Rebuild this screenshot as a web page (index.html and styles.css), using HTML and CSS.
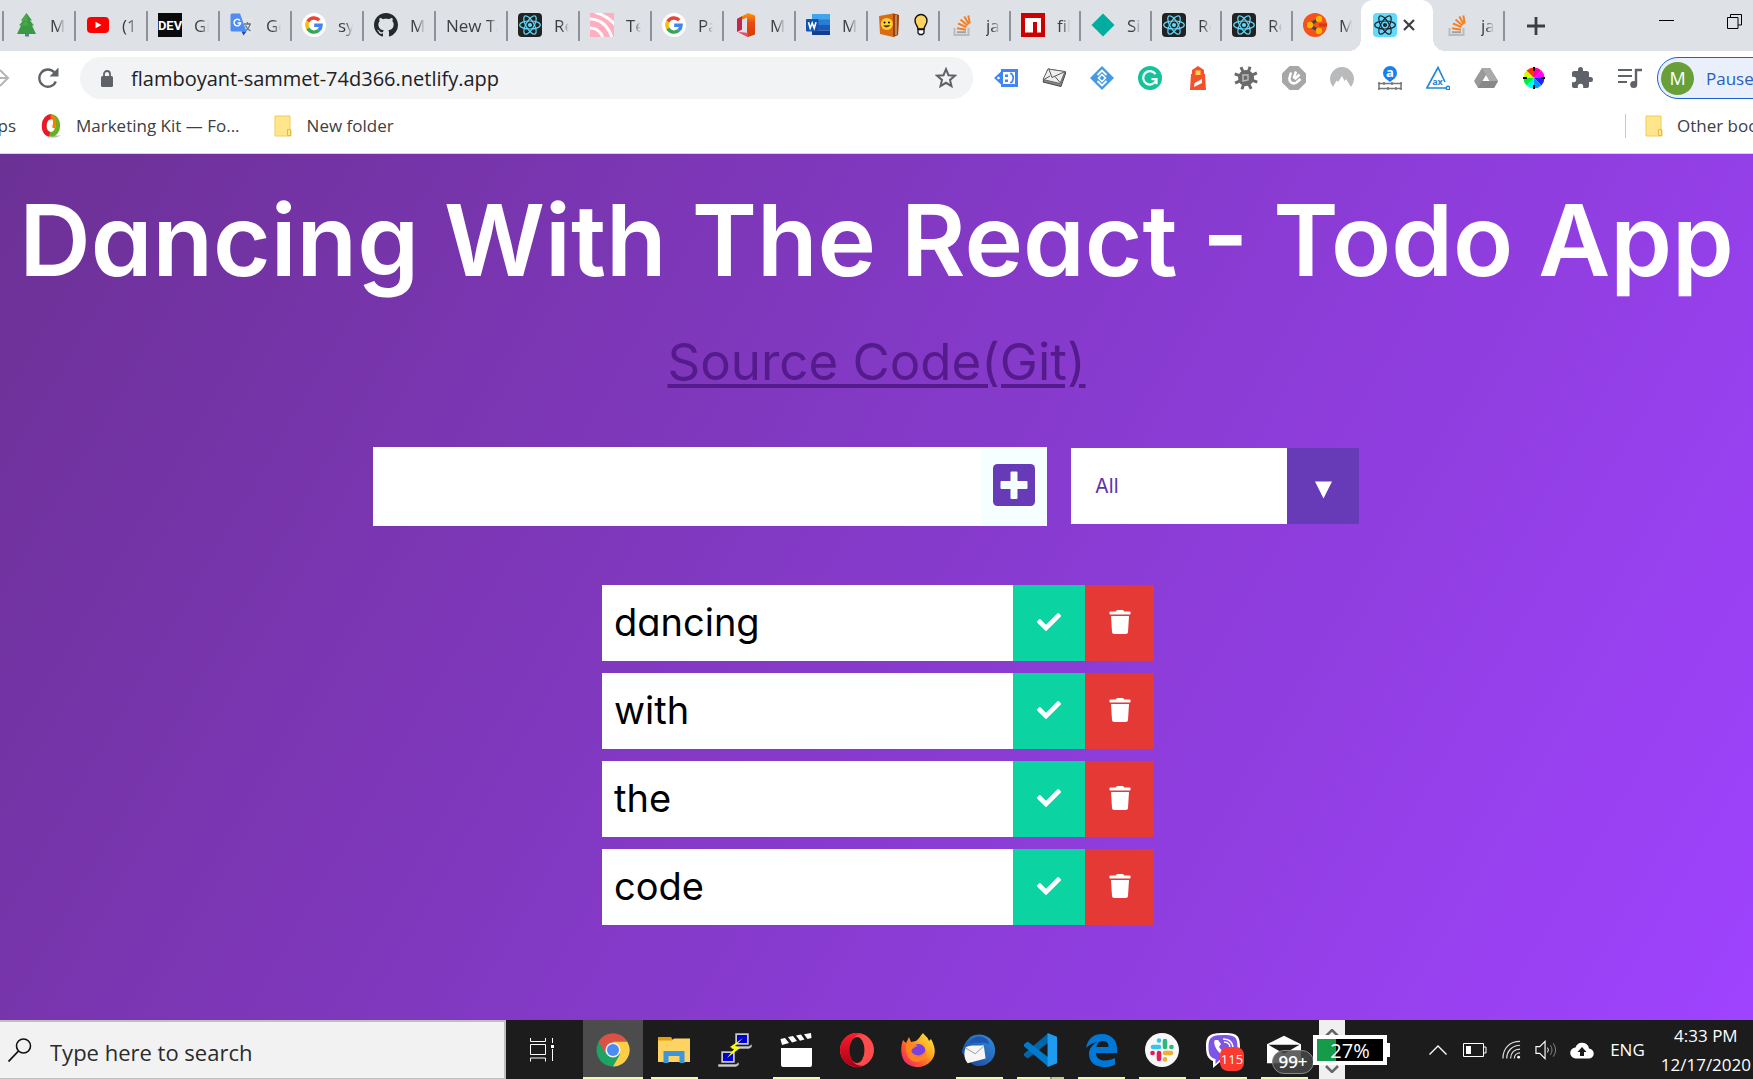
FILE: index.html
```html
<!DOCTYPE html>
<html lang="en">
<head>
<meta charset="utf-8">
<title>Dancing With The React - Todo App</title>
<link rel="stylesheet" href="styles.css">
</head>
<body>
<svg class="sprite" aria-hidden="true">
  <defs>
    <linearGradient id="operaRing" x1="0" y1="0" x2="0" y2="1"><stop offset="0" stop-color="#ff1b2d"/><stop offset="1" stop-color="#a70014"/></linearGradient>
    <linearGradient id="fox" x1="1" y1="0" x2="0" y2="1"><stop offset="0" stop-color="#fff44f"/><stop offset=".35" stop-color="#ffb01f"/><stop offset=".65" stop-color="#ff5a2c"/><stop offset="1" stop-color="#e31587"/></linearGradient>
    <linearGradient id="bird" x1="0" y1="1" x2="1" y2="0"><stop offset="0" stop-color="#1c3f94"/><stop offset="1" stop-color="#2f8fe0"/></linearGradient>
    <linearGradient id="officeFill" x1="0" y1="0" x2="0" y2="1"><stop offset="0" stop-color="#ff9a00"/><stop offset=".4" stop-color="#e64a19"/><stop offset="1" stop-color="#d83b01"/></linearGradient>
  </defs>
  <symbol id="atom" viewBox="0 0 24 24">
    <g fill="none" stroke="currentColor" stroke-width="1.2"><ellipse cx="12" cy="12" rx="10.3" ry="4"/><ellipse cx="12" cy="12" rx="10.3" ry="4" transform="rotate(60 12 12)"/><ellipse cx="12" cy="12" rx="10.3" ry="4" transform="rotate(120 12 12)"/></g><circle cx="12" cy="12" r="2.1" fill="currentColor"/>
  </symbol>
  <symbol id="google" viewBox="0 0 24 24">
    <circle cx="12" cy="12" r="12" fill="#fff"/>
    <g fill="none" stroke-width="3.4"><path d="M17.2 7.2A7.1 7.1 0 0 0 5.8 8.6" stroke="#ea4335"/><path d="M5.8 8.6a7.1 7.1 0 0 0 0 6.8" stroke="#fbbc05"/><path d="M5.8 15.4a7.1 7.1 0 0 0 11 1.9" stroke="#34a853"/><path d="M16.8 17.3a7.1 7.1 0 0 0 2.3-5H12.2" stroke="#4285f4"/></g>
  </symbol>
  <symbol id="stack" viewBox="0 0 24 24">
    <path d="M4.500 15v7h14v-7" fill="none" stroke="#bcbbbb" stroke-width="2"/><path d="M7 19.200h9" stroke="#9fa2a5" stroke-width="2"/><g stroke="#f48024" stroke-width="2"><path d="M7 15.300l9 1.400M8 10.500l8.400 3.600M10.600 6.400l6.800 6M14.300 3.600l4.500 7.600M18.300 2.500l1.500 8"/></g>
  </symbol>
  <symbol id="folder" viewBox="0 0 18 22">
    <path d="M1 1h15v14h1v6H1z" fill="#ffe58c" stroke="#f2cc55"/><path d="M13.500 20.500v-6h3v6z" fill="#ffe999" stroke="#e8b93a"/>
  </symbol>
  <symbol id="check" viewBox="0 0 512 512"><path fill="#fff" d="M173.900 439.400l-166.400-166.400c-10-10-10-26.200 0-36.200l36.200-36.200c10-10 26.200-10 36.200 0L192 312.690 432.100 72.600c10-10 26.200-10 36.200 0l36.200 36.200c10 10 10 26.200 0 36.200l-294.400 294.400c-10 10-26.200 10-36.200 0z"/></symbol>
  <symbol id="trash" viewBox="0 0 448 512"><path fill="#fff" d="M432 32H312l-9.400-18.700A24 24 0 0 0 281.100 0H166.800a23.720 23.720 0 0 0-21.400 13.300L136 32H16A16 16 0 0 0 0 48v32a16 16 0 0 0 16 16h416a16 16 0 0 0 16-16V48a16 16 0 0 0-16-16zM53.200 467a48 48 0 0 0 47.900 45h245.800a48 48 0 0 0 47.900-45L416 128H32z"/></symbol>
</svg>

<header class="browser">
  <div class="tabstrip">
    <div class="tabs">
      <button class="tab"><svg class="fav" viewBox="0 0 24 24"><path d="M11 19h4v4.500h-4z" fill="#5b7d95"/><path d="M12.500 0l5.500 7.500h-2l4 5h-2l4 8.500H3l4-8.500H5l4-5H7z" fill="#3a9a43"/><path d="M12.500 0L7 8h7zM6 12.500h9L12 8z" fill="#57b04c" opacity=".6"/></svg><span>MDN</span></button>
      <button class="tab"><svg class="fav" viewBox="0 0 24 24"><rect x="1" y="4" width="22" height="16" rx="4" fill="#f00"/><path d="M9.500 8.800v6.400l6-3.200z" fill="#fff"/></svg><span>(1)</span></button>
      <button class="tab"><svg class="fav" viewBox="0 0 24 24"><path d="M0 0h24v24H0z" fill="#0a0a0a"/><text x="12" y="17" text-anchor="middle" class="dev">DEV</text></svg><span>Git</span></button>
      <button class="tab"><svg class="fav" viewBox="0 0 24 24"><path d="M10 5h11a1.500 1.500 0 0 1 1.500 1.500V21a1.500 1.500 0 0 1-1.500 1.500h-8z" fill="#e3e4e6"/><path d="M14 11h7M17.500 9v2M15 18c3-1.500 4.500-4 5-7M15.500 12.500c1 2.500 2.500 4 5 5.500" stroke="#607988" fill="none" stroke-width="1.300"/><path d="M2 .5h8l6.500 18H2A1.500 1.500 0 0 1 .5 17V2A1.500 1.500 0 0 1 2 .5z" fill="#4f8df5"/><path d="M11.500 18.500h5l-3 4z" fill="#2547b8"/><path d="M10 7.600A3.300 3.300 0 1 0 10.600 10H7.600" fill="none" stroke="#fff" stroke-width="1.500"/></svg><span>Go</span></button>
      <button class="tab"><svg class="fav"><use href="#google"/></svg><span>syn</span></button>
      <button class="tab"><svg class="fav" viewBox="0 0 16 16"><path fill="#24292e" d="M8 0C3.580 0 0 3.580 0 8c0 3.540 2.290 6.530 5.470 7.590.4.070.55-.17.55-.38 0-.19-.01-.82-.01-1.490-2.010.37-2.530-.49-2.690-.94-.09-.23-.48-.94-.82-1.130-.28-.15-.68-.52-.01-.53.63-.01 1.080.58 1.230.82.72 1.210 1.870.87 2.330.66.070-.52.280-.87.510-1.070-1.780-.2-3.640-.89-3.640-3.950 0-.87.310-1.590.82-2.150-.08-.2-.36-1.020.080-2.120 0 0 .67-.21 2.200.82.640-.18 1.320-.27 2-.27s1.360.090 2 .27c1.530-1.040 2.200-.82 2.200-.82.44 1.100.160 1.920.080 2.120.510.560.820 1.270.820 2.150 0 3.070-1.870 3.750-3.650 3.950.290.250.540.730.540 1.480 0 1.070-.010 1.930-.010 2.200 0 .210.150.460.550.380A8.010 8.010 0 0 0 16 8c0-4.420-3.580-8-8-8z"/></svg><span>My</span></button>
      <button class="tab plain"><span>New Tab</span></button>
      <button class="tab"><svg class="fav react"><use href="#atom"/></svg><span>Re</span></button>
      <button class="tab"><svg class="fav" viewBox="0 0 24 24"><path d="M0 0h24v24H0z" fill="#ffadbf"/><g fill="none" stroke="#fff" stroke-width="3"><path d="M5-1c9 3 16 7 21 14M-1 6c11 0 19 6 23 19M-1 15c7 0 12 4 14 10"/></g></svg><span>Te</span></button>
      <button class="tab"><svg class="fav"><use href="#google"/></svg><span>Pa</span></button>
      <button class="tab"><svg class="fav" viewBox="0 0 24 24"><path d="M3 6l11-6 7 2.500v19L14 24l-9-4.500 8 .5V4.500L8 6.500v10L3 18.500z" fill="url(#officeFill)"/><path d="M3 6l5-2.800v13.300L3 19z" fill="#c5264f"/><path d="M4 19l10 1v4z" fill="#f0457b"/></svg><span>Mi</span></button>
      <button class="tab"><svg class="fav" viewBox="0 0 24 24"><path d="M6 1h18v6H6z" fill="#41a5ee"/><path d="M6 6.500h18V12H6z" fill="#2b7cd3"/><path d="M6 12h18v5.500H6z" fill="#185abd"/><path d="M6 17.500h18V22H6z" fill="#103f91"/><rect y="6" width="12.500" height="12.500" rx="1" fill="#1552b0"/><path d="M2.500 9.200L4.200 15.300 6.200 10l2 5.300 1.800-6.100" fill="none" stroke="#fff" stroke-width="1.600"/></svg><span>Mi</span></button>
      <button class="tab"><svg class="fav" viewBox="0 0 24 24"><path d="M1 3l14-2.500 6 1.500-1 20-5 2L2 21z" fill="#dc6b16"/><path d="M15 .5l6 1.500-1 20-5 2z" fill="#9a4210"/><path d="M18 2v20" stroke="#e7c99e"/><circle cx="8.800" cy="11" r="6" fill="#ffd22e"/><circle cx="6.500" cy="9.500" r="1"/><circle cx="11" cy="9.500" r="1"/><path d="M5 12.500q4 4 7.500-.5z" fill="#5b3208"/></svg><svg class="bulb" viewBox="0 0 14 24"><path d="M4 16C4 13 1 12 1 7.500a6 6 0 0 1 12 0C13 12 10 13 10 16z" fill="#ffd45c" stroke="#111" stroke-width="1.400"/><path d="M4 16.500h6V20l-1.500 1.500h-3L4 20z" fill="#fff" stroke="#111" stroke-width="1.300"/></svg></button>
      <button class="tab"><svg class="fav"><use href="#stack"/></svg><span>jav</span></button>
      <button class="tab"><svg class="fav" viewBox="0 0 24 24"><path d="M0 0h24v24H0z" fill="#cb0000"/><path d="M4 5h16v14.500h-4V9h-4v10.500H4z" fill="#fff"/></svg><span>file</span></button>
      <button class="tab"><svg class="fav" viewBox="0 0 24 24"><path d="M12 .5L23.500 12 12 23.500.5 12z" fill="#00ad9f"/></svg><span>Sit</span></button>
      <button class="tab"><svg class="fav react"><use href="#atom"/></svg><span>Re</span></button>
      <button class="tab"><svg class="fav react"><use href="#atom"/></svg><span>Re</span></button>
      <button class="tab"><svg class="fav" viewBox="0 0 24 24"><circle cx="12" cy="12" r="12" fill="#f4511e"/><path d="M16 6L6 12l10 6" stroke="#3c4450" stroke-width="3" fill="none"/><path d="M16 12h8" stroke="#d33a10" stroke-width="3"/><g fill="#ffb300"><circle cx="16" cy="6" r="3.200"/><circle cx="7" cy="12" r="3.200"/><circle cx="16" cy="18" r="3.200"/></g></svg><span>Mo</span></button>
      <button class="tab active"><svg class="fav react light"><use href="#atom"/></svg><svg class="close" viewBox="0 0 12 12"><path d="M1 1l10 10M11 1L1 11" stroke="#3c4043" stroke-width="2.200"/></svg></button>
      <button class="tab after"><svg class="fav"><use href="#stack"/></svg><span>jav</span></button>
    </div>
    <button class="newtab" aria-label="New tab"><svg viewBox="0 0 18 18"><path d="M9 0v18M0 9h18" stroke="#3c4043" stroke-width="2.800"/></svg></button>
    <div class="winbtns">
      <button aria-label="Minimize"><svg viewBox="0 0 15 15"><path d="M0 6.500h15" stroke="#000"/></svg></button>
      <button aria-label="Restore"><svg viewBox="0 0 15 15"><path d="M.5 3.500h10.500v11H.5zM3.500 3.500V.5h11v10.500H11" fill="none" stroke="#000"/></svg></button>
    </div>
  </div>

  <div class="toolbar">
    <button class="nav" aria-label="Forward"><svg class="fwd" viewBox="0 0 10 20"><path d="M0 10h8M0 2l8 8-8 8" fill="none" stroke="#b4b6b9" stroke-width="2"/></svg></button>
    <button class="nav" aria-label="Reload"><svg class="reload" viewBox="0 0 22 22"><path d="M18.800 14.500A8.600 8.600 0 1 1 17.500 5.600" fill="none" stroke="#5f6368" stroke-width="2.300"/><path d="M21.500.5v9h-9z" fill="#5f6368"/></svg></button>
    <div class="omnibox">
      <svg class="lock" viewBox="0 0 12 17"><rect y="6" width="12" height="11" rx="1.500" fill="#5f6368"/><path d="M3 7V4a3 3 0 0 1 6 0v3" fill="none" stroke="#5f6368" stroke-width="1.800"/></svg>
      <input type="text" aria-label="Address" value="flamboyant-sammet-74d366.netlify.app">
      <button class="star" aria-label="Bookmark"><svg viewBox="0 0 22 22"><path d="M11 2.200l2.500 6 6.400.5-4.900 4.200 1.500 6.300L11 15.800l-5.500 3.400L7 12.900 2.100 8.700l6.400-.5z" fill="none" stroke="#5f6368" stroke-width="2"/></svg></button>
    </div>
    <div class="exts">
      <svg viewBox="0 0 24 24"><path d="M0 12l7-6.500V3h17v18H7v-2.500z" fill="#4285f4"/><path d="M9 6h12v12H9z" fill="#fff"/><circle cx="4.500" cy="12" r="1.300" fill="#fff"/><path d="M11 8.500h3v2.500h-3zM11 13.500h3V16h-3z" fill="#4285f4"/><path d="M16 7.500h1.500q3.500 4.500 0 9H16" fill="none" stroke="#4285f4" stroke-width="1.700"/></svg>
      <svg viewBox="0 0 24 24"><path d="M6 3l18 3-5 14.500L1 16z" fill="#888" stroke="#444"/><path d="M6 3l17 2.500-5 12L1 13.500z" fill="#eee" stroke="#666"/><path d="M7 3.500l3 8 12-5.500M2 13.500l6-3.500M13 10.500l5 6" fill="none" stroke="#555" stroke-width="1"/></svg>
      <svg viewBox="0 0 24 24"><path d="M12 0l12 12-12 12L0 12z" fill="#4599e5"/><path d="M7.500 9L12 4.500 16.500 9M7.500 15l4.500 4.500 4.500-4.500" stroke="#fff" fill="none" stroke-width="1.800"/><path d="M12 8.500l3.500 3.500-3.500 3.500L8.500 12z" stroke="#fff" fill="none" stroke-width="1.500"/></svg>
      <svg viewBox="0 0 24 24"><circle cx="12" cy="12" r="12" fill="#15c39a"/><path d="M17.500 8.200A6.700 6.700 0 1 0 18.200 14M13.500 13.200h5v5" fill="none" stroke="#fff" stroke-width="2.200"/></svg>
      <svg viewBox="0 0 24 24"><path d="M12 0l6 4v4h1l1 16H4L5 8h1V4z" fill="#f4512c"/><path d="M9.500 4.500h5V9h-5z" fill="#ffd54f"/><path d="M8.500 17l7.500-4v4l-8 4z" fill="#fff"/></svg>
      <svg viewBox="0 0 24 24"><g transform="rotate(20 12 12)"><path d="M12 0v24M0 12h24M3.500 3.500l17 17M20.500 3.500l-17 17" stroke="#6a6a6a" stroke-width="3"/><circle cx="12" cy="12" r="8" fill="#6a6a6a"/></g><path d="M9 9v6l5-1V9z" fill="none" stroke="#bbb" stroke-width="1.500"/></svg>
      <svg viewBox="0 0 24 24"><path d="M8 1h8l7 7v8l-7 7H8l-7-7V8z" fill="#a7a7a7" stroke="#a7a7a7" stroke-width="2" stroke-linejoin="round"/><path d="M9 6.500L7.500 12a4.500 4.500 0 0 0 7 4.500l4-3.500M14 5.500l-2 6 1.500 1 4-4" fill="none" stroke="#fff" stroke-width="2.500"/></svg>
      <svg viewBox="0 0 24 24"><path d="M3 21A12 12 0 1 1 21 21L16 13l-1.500 2L12 10l-4 6-1.500-1.500z" fill="#b9babc"/></svg>
      <svg viewBox="0 0 24 24"><path d="M12 16l-5-4h10z" fill="#1a73e8"/><circle cx="12" cy="7" r="7" fill="#1a80ee"/><text x="12" y="11" text-anchor="middle" class="ruler-a">a</text><path d="M0 17.500h24M0 22.500h24M1 16v8M6 16v3M10 21v3M14 16v3M18 21v3M23 16v8" stroke="#777" stroke-width="1.500"/></svg>
      <svg viewBox="0 0 24 24"><path d="M19 16L12 1.500.8 22H20" fill="none" stroke="#2787d2" stroke-width="1.700"/><circle cx="22" cy="22" r="1.800" fill="none" stroke="#2787d2" stroke-width="1.500"/><text x="11.500" y="18.500" text-anchor="middle" class="ax">ax</text></svg>
      <svg viewBox="0 0 24 24"><path d="M8 2h8l8 13-4 7H4L0 15z" fill="#999"/><path d="M8 2h8l8 13h-8z" fill="#aaa"/><path d="M4 22l4-7h16l-4 7z" fill="#888"/><path d="M12 9l3.500 6h-7z" fill="#fff"/></svg>
      <svg viewBox="0 0 24 24"><g stroke="none"><path d="M12 12L12 1.500A10.500 10.500 0 0 1 19.400 4.600z" fill="#f0a"/><path d="M12 12L19.400 4.600A10.500 10.500 0 0 1 22.500 12z" fill="#f0f"/><path d="M12 12H22.500A10.500 10.500 0 0 1 19.400 19.400z" fill="#22f"/><path d="M12 12L19.400 19.400A10.500 10.500 0 0 1 12 22.500z" fill="#09f"/><path d="M12 12V22.500A10.500 10.500 0 0 1 4.600 19.400z" fill="#0fe"/><path d="M12 12L4.600 19.400A10.500 10.500 0 0 1 1.500 12z" fill="#0e3"/><path d="M12 12H1.500A10.500 10.500 0 0 1 4.600 4.600z" fill="#cf0"/><path d="M12 12L4.600 4.600A10.500 10.500 0 0 1 12 1.500z" fill="#f30"/></g><path d="M12 1v4M12 19v4M1 12h4M19 12h4" stroke="#000" stroke-width="2"/></svg>
      <svg viewBox="0 0 24 24"><path fill="#5f6368" d="M20.500 11H19V7c0-1.100-.9-2-2-2h-4V3.500a2.500 2.500 0 0 0-5 0V5H4c-1.100 0-2 .9-2 2v3.800h1.500a2.700 2.700 0 0 1 0 5.400H2V20c0 1.100.9 2 2 2h3.800v-1.500a2.700 2.700 0 0 1 5.400 0V22H17c1.100 0 2-.9 2-2v-4h1.500a2.500 2.500 0 0 0 0-5z"/></svg>
      <svg viewBox="0 0 24 24"><path d="M0 4h14M0 10h14M0 16h9" stroke="#5f6368" stroke-width="2.200"/><path d="M18 18V4h6" fill="none" stroke="#5f6368" stroke-width="2.400"/><circle cx="15.700" cy="18.500" r="3.500" fill="#5f6368"/></svg>
    </div>
    <button class="profile"><b>M</b><span>Paused</span></button>
  </div>

  <nav class="bookmarks" aria-label="Bookmarks">
    <a class="apps" href="#apps">Apps</a>
    <a href="#kit"><svg class="bm" viewBox="0 0 20 22"><path d="M13 20h7l-5 2H8z" fill="#bbb"/><ellipse cx="10.500" cy="10.500" rx="6.500" ry="8.500" fill="none" stroke="#6ab023" stroke-width="4.500"/><path d="M11 2C3 2 1 17 9 19" fill="none" stroke="#f0142f" stroke-width="4.500"/><path d="M10 2c4 0 5 5 3 11" fill="none" stroke="#ff7a00" stroke-width="3"/></svg>Marketing Kit — Fo...</a>
    <a href="#new"><svg class="bm folder"><use href="#folder"/></svg>New folder</a>
    <a class="other" href="#other"><svg class="bm folder"><use href="#folder"/></svg>Other bookmarks</a>
  </nav>
</header>

<main class="app">
  <h1>Dancing With The React - Todo App</h1>
  <a class="source" href="#source">Source Code(Git)</a>
  <form class="entry">
    <div class="add">
      <input type="text" aria-label="New todo">
      <button type="button" aria-label="Add"><svg viewBox="0 0 42 42"><rect width="42" height="42" rx="4.500" fill="#673ab7"/><path d="M18.500 7.500h5a1 1 0 0 1 1 1V17h9a1 1 0 0 1 1 1v6a1 1 0 0 1-1 1h-9v9a1 1 0 0 1-1 1h-5a1 1 0 0 1-1-1v-9h-9a1 1 0 0 1-1-1v-6a1 1 0 0 1 1-1h9V8.500a1 1 0 0 1 1-1z" fill="#f5ffff"/></svg></button>
    </div>
    <div class="filter">
      <select aria-label="Filter todos"><option>All</option><option>Completed</option><option>Uncompleted</option></select>
      <span class="arrow"><svg viewBox="0 0 18 18"><path d="M0 0h18L9 18z" fill="#fff"/></svg></span>
    </div>
  </form>
  <ul class="todos">
    <li><span>dancing</span><button class="done" aria-label="Complete"><svg><use href="#check"/></svg></button><button class="del" aria-label="Delete"><svg><use href="#trash"/></svg></button></li>
    <li><span>with</span><button class="done" aria-label="Complete"><svg><use href="#check"/></svg></button><button class="del" aria-label="Delete"><svg><use href="#trash"/></svg></button></li>
    <li><span>the</span><button class="done" aria-label="Complete"><svg><use href="#check"/></svg></button><button class="del" aria-label="Delete"><svg><use href="#trash"/></svg></button></li>
    <li><span>code</span><button class="done" aria-label="Complete"><svg><use href="#check"/></svg></button><button class="del" aria-label="Delete"><svg><use href="#trash"/></svg></button></li>
  </ul>
</main>

<footer class="taskbar">
  <label class="search">
    <svg viewBox="0 0 24 24"><circle cx="15.500" cy="8" r="7" fill="none" stroke="#111" stroke-width="1.600"/><path d="M10.500 13L.5 23.500" stroke="#111" stroke-width="1.800"/></svg>
    <input type="text" aria-label="Search" placeholder="Type here to search">
  </label>
  <button class="taskview" aria-label="Task view"><svg viewBox="0 0 24 24"><path d="M.5 0v3.500h15V0M.5 6.500h15v10H.5zM.5 23.500V20h15v3.500M22.500 0v5M22.500 11v12" fill="none" stroke="#fff"/><path d="M21 7h3v3h-3z" fill="#fff"/></svg></button>
  <div class="apps-row">
    <button class="task run front" aria-label="Chrome"><svg viewBox="0 0 34 34"><circle cx="17" cy="17" r="16.500" fill="#1da362"/><path d="M2.700 8.700A16.500 16.500 0 0 1 31.300 8.700H17L9.800 21.200z" fill="#dd5144"/><path d="M31.300 8.700A16.500 16.500 0 0 1 17 33.500L24.200 21 17 8.700z" fill="#ffcd46"/><circle cx="17" cy="17" r="7.600" fill="#f1f1f1"/><circle cx="17" cy="17" r="6" fill="#4c8bf5"/></svg></button>
    <button class="task run" aria-label="File Explorer"><svg viewBox="0 0 34 34"><path d="M1 4h13l2 3v4H1z" fill="#e3a008"/><path d="M1 7.500h14l2-2h16V29H1z" fill="#ffd361"/><path d="M6.500 30V18h21v12h-5v-7h-11v7z" fill="#3a96dd"/></svg></button>
    <button class="task" aria-label="PuTTY"><svg viewBox="0 0 34 34"><g stroke="#222" stroke-width=".6"><path d="M17 0h14v12H17zM15 13h16l3-2v3l-3 2H13z" fill="#ccc"/><path d="M3 18h14v12H3zM0 31h18l3-2v3l-3 2H0z" fill="#ccc"/></g><path d="M19 2h10v8H19zM5 20h10v8H5z" fill="#00d"/><path d="M25 5l-13 9 4 2-7 9 13-10-5-2z" fill="#ff0"/></svg></button>
    <button class="task run" aria-label="Video editor"><svg viewBox="0 0 34 34"><path d="M2 15h31v17a2 2 0 0 1-2 2H4a2 2 0 0 1-2-2z" fill="#fff"/><path d="M1.500 6L6 5l4 5-7 2zM9 4l5-1 4 5-5 1.500zM17 2.500l5-1 3.500 5-4.500 1.200zM25 1.200l7-1.200.5 5-4 1z" fill="#fff"/></svg></button>
    <button class="task" aria-label="Opera"><svg viewBox="0 0 34 34"><circle cx="17" cy="17" r="17" fill="#ff4b4b"/><path d="M24 1.500A17 17 0 1 0 24 32.500C14 34 10 26 10 17S14 0 24 1.500z" fill="url(#operaRing)"/><ellipse cx="17" cy="17" rx="7.500" ry="13" fill="#1c1c1c"/></svg></button>
    <button class="task" aria-label="Firefox"><svg viewBox="0 0 34 34"><path d="M22 0c2 3 5 4 6 8l2-2c5 9 5 16 0 22-7 8-19 8-26 1C0 24-1 15 2 7l3 3 3-6 2 5 5-1c3-2 4-5 7-8z" fill="url(#fox)"/><circle cx="17.500" cy="18" r="7" fill="#7a3fe0"/><path d="M5 11c5-2 9 0 12 2-3 1-5 2-7 5 4 6 11 6 15-1 2 8-4 12-9 12C8 29 4 22 5 11z" fill="#ff8a1e" opacity=".85"/></svg></button>
    <button class="task run" aria-label="Thunderbird"><svg viewBox="0 0 36 34"><path d="M9 3C20-3 34 3 35 16c1 10-7 18-17 18-6 0-10-4-12-8L0 20c0-4 3-12 9-17z" fill="url(#bird)"/><path d="M4 14c7-3 12-1 19-2l2 14-19 5c-3-4-5-9-2-17z" fill="#f6f6f6"/><path d="M4 15l10 6 9-8" fill="none" stroke="#999"/><path d="M7 10c6-11 20-9 22 1-6-3-11-1-15-2-3 0-5 1-7 1z" fill="#1d55b0"/></svg></button>
    <button class="task run split" aria-label="Visual Studio Code"><svg viewBox="0 0 36 36"><path d="M27 0v10L5 27l-4-3v-2z" fill="#0065a9"/><path d="M27 36V26L5 9l-4 3v2z" fill="#007acc"/><path d="M26 0l10 4v28l-10 4z" fill="#1f9cf0"/></svg></button>
    <button class="task run" aria-label="Edge"><svg viewBox="0 0 34 34"><path fill="#0078d7" d="M2 15C4 5 10 1 18 1c10 0 15 7 15 15v4H12c0 5 4 7.500 9 7.500 4 0 7-1 10-2.500v6.500c-3 2-7 2.500-11 2.500C11 34 5 29 5 21c0-5 3-9 8-12-5 1-8 3-11 6zM12.500 14h12c0-4-2-6-6-6-3 0-5.500 2-6 6z"/></svg></button>
    <button class="task run" aria-label="Slack"><svg viewBox="0 0 34 34"><circle cx="17" cy="17" r="17" fill="#f8f8f8"/><g stroke-width="4.600" stroke-linecap="round"><path d="M8 14h6M14 7.500v.1" stroke="#36c5f0"/><path d="M20 8v6M26.500 14h-.1" stroke="#2eb67d"/><path d="M20 20h6M20 26.500v-.1" stroke="#ecb22e"/><path d="M14 20v6M7.500 20h.1" stroke="#e01e5a"/></g></svg></button>
    <button class="task run" aria-label="Viber"><svg viewBox="0 0 34 34"><path d="M17 0C3 0 0 3 0 14c0 8 2 12 7 14v7l7-6c15 1 20-3 20-15S31 0 17 0z" fill="#fff"/><path d="M17 2C5 2 2.500 5 2.500 14c0 8 2 11 7 12v5l4-4c14 1 18-3 18-13S29 2 17 2z" fill="#7d55e8"/><path d="M9 7c-3 3 3 15 12 17l3-3-4-4-3 2-4-5 2-3-3-4z" fill="#fff"/><path d="M17 6c7 0 10 4 10 10M18 9c4 0 6 2 6 6" fill="none" stroke="#fff" stroke-width="1.400"/></svg><span class="badge red">115</span></button>
    <button class="task run" aria-label="Mail"><svg viewBox="0 0 36 34"><path d="M0 11L18 2l18 9v20H0z" fill="#fff"/><path d="M1.500 11.500h33L18 21z" fill="#1c1c1c"/></svg><span class="badge grey">99+</span></button>
  </div>
  <div class="meter">
    <svg viewBox="0 0 14 8"><path d="M1 7l6-6 6 6" fill="none" stroke="#666" stroke-width="2.500"/></svg>
    <svg viewBox="0 0 14 8"><path d="M1 1l6 6 6-6" fill="none" stroke="#666" stroke-width="2.500"/></svg>
    <span class="charge">27%</span>
  </div>
  <div class="tray">
    <svg class="t-up" viewBox="0 0 18 10"><path d="M.5 9.500L9 1l8.500 8.500" fill="none" stroke="#fff" stroke-width="1.400"/></svg>
    <svg class="t-bat" viewBox="0 0 24 14"><path d="M.500.5h20v13H.5zM21 4h2v6h-2" fill="none" stroke="#fff"/><path d="M3 3h5v8H3z" fill="#fff"/></svg>
    <svg class="t-wifi" viewBox="0 0 20 20"><g fill="none" stroke="#ddd" stroke-width="1.300"><path d="M1 19C1 8 8 1 19 1M5 19C5 11 11 5 19 5M9 19c0-6 4-10 10-10M13 19c0-3.500 2.500-6 6-6"/></g><circle cx="17.500" cy="17.500" r="1.500" fill="#fff"/></svg>
    <svg class="t-vol" viewBox="0 0 24 20"><path d="M1 6.500h4L10.500 1v18L5 13.500H1z" fill="none" stroke="#fff" stroke-width="1.200"/><path d="M13 7.500q2 2.500 0 5" fill="none" stroke="#fff"/><path d="M16 5q3.500 5 0 10M19 3q5 7 0 14" fill="none" stroke="#888"/></svg>
    <svg class="t-cloud" viewBox="0 0 24 18"><path d="M6 17.500a5.500 5.500 0 0 1-.5-11 7 7 0 0 1 13.500 1 5 5 0 0 1-.5 10z" fill="#fff"/><path d="M12 6l4.500 5H14v4h-4v-4H7.500z" fill="#1c1c1c"/></svg>
    <span>ENG</span>
    <time class="clock"><span>4:33 PM</span><span>12/17/2020</span></time>
  </div>
</footer>
</body>
</html>
```
FILE: styles.css
```css
* { box-sizing: border-box; }
html, body { margin: 0; }
body {
  display: flex;
  flex-direction: column;
  min-height: 100vh;
  overflow-x: hidden;
  font-family: "Open Sans", sans-serif;
  font-size: 17px;
  color: #3c4043;
}
button, input, select {
  margin: 0;
  padding: 0;
  border: 0;
  background: none;
  color: inherit;
  font: inherit;
  outline: 0;
}
svg { display: block; flex: none; }
.sprite { position: absolute; width: 0; height: 0; }

/* Tab strip */
.browser { background: #fff; border-bottom: 1px solid #d5d6d9; }
.tabstrip {
  display: flex;
  align-items: stretch;
  height: 51px;
  padding-left: 2px;
  background: #dee1e6;
}
.tabs {
  display: grid;
  grid-template-columns: repeat(13, 72px) 71px 70px 71px 70px 71px 70px 72px 70px;
}
.tab {
  display: flex;
  align-items: center;
  gap: 12px;
  padding: 0 9px 1px 10px;
  border-left: 2px solid transparent;
  background: linear-gradient(#8f9399, #8f9399) border-box 0 11px / 2px 30px no-repeat;
  overflow: hidden;
  white-space: nowrap;
}
.tab span {
  flex: 1;
  overflow: hidden;
  text-align: left;
  -webkit-mask-image: linear-gradient(to right, #000 calc(100% - 8px), transparent);
  mask-image: linear-gradient(to right, #000 calc(100% - 8px), transparent);
}
.fav { width: 24px; height: 24px; }
.fav.react { border-radius: 4px; background: #222; color: #61dafb; }
.fav.light { background: #61dafb; color: #20232a; }
.bulb { width: 14px; height: 24px; }
.dev { font: bold 13px "Liberation Sans Narrow", "Roboto", sans-serif; fill: #fff; }
.close { width: 12px; height: 12px; }
.tab.active {
  position: relative;
  gap: 6px;
  overflow: visible;
  border-radius: 12px 12px 0 0;
  background: #fff;
}
.tab.active::before, .tab.active::after {
  content: "";
  position: absolute;
  bottom: 0;
  width: 12px;
  height: 12px;
}
.tab.active::before { right: 100%; margin-right: 2px; background: radial-gradient(circle at 0 0, #dee1e6 12px, #fff 12px); }
.tab.active::after { left: 100%; background: radial-gradient(circle at 100% 0, #dee1e6 12px, #fff 12px); }
.tab.after { background: none; }
.newtab {
  padding: 0 24px;
  background: linear-gradient(#8f9399, #8f9399) 0 11px / 2px 30px no-repeat;
}
.newtab svg { width: 18px; height: 18px; }
.winbtns { display: flex; gap: 53px; margin-left: auto; padding: 0 11px 8px 0; align-items: center; }
.winbtns svg { width: 15px; height: 15px; }

/* Toolbar */
.toolbar { display: flex; align-items: center; padding: 6px 0 0; overflow: hidden; }
.nav { flex: none; }
.fwd { width: 10px; height: 20px; }
.reload { width: 22px; height: 22px; margin: 0 21px 0 27px; }
.omnibox {
  display: flex;
  flex: 1;
  align-items: center;
  height: 42px;
  padding: 0 16px 0 21px;
  border-radius: 21px;
  background: #f1f3f4;
}
.lock { width: 12px; height: 17px; }
.omnibox input { flex: 1; margin-left: 18px; font-size: 20px; color: #202124; }
.star svg { width: 22px; height: 22px; }
.exts { display: flex; gap: 24px; margin: 0 15px 0 21px; }
.exts svg { width: 24px; height: 24px; }
.ruler-a { font: bold 13px "Open Sans", sans-serif; fill: #fff; }
.ax { font: bold 9px "Open Sans", sans-serif; fill: #2787d2; }
.profile {
  display: flex;
  align-items: center;
  gap: 12px;
  width: 120px;
  height: 42px;
  margin-right: -24px;
  padding-left: 3px;
  border: 1px solid #1a62d6;
  border-radius: 21px;
  background: #e9f0fc;
  color: #2b5dbd;
}
.profile b {
  width: 33px;
  height: 33px;
  border-radius: 50%;
  background: #689f38;
  color: #fff;
  font-weight: 400;
  font-size: 18px;
  line-height: 33px;
}
.bookmarks { display: flex; height: 54px; align-items: center; overflow: hidden; white-space: nowrap; }
.bookmarks a { display: flex; align-items: center; color: inherit; text-decoration: none; gap: 15px; margin-left: 34px; line-height: 24px; }
.bookmarks .apps { width: 16px; margin-left: 0; margin-right: -10px; justify-content: flex-end; }
.bm { width: 21px; height: 24px; }
.bm.folder { width: 18px; height: 22px; }
.bookmarks .other { width: 128px; margin-left: auto; padding-left: 19px; border-left: 1px solid #c6c8cb; gap: 14px; }

/* Todo app */
.app {
  display: flex;
  flex: 1;
  flex-direction: column;
  align-items: center;
  background: linear-gradient(120deg, #6c3195, #9f43ff);
  font-family: "Inter", sans-serif;
  font-feature-settings: "cv11";
}
h1 {
  margin: 14px 0 0;
  color: #fff;
  font-size: 99px;
  font-weight: 600;
  line-height: 144px;
  white-space: nowrap;
}
.source {
  margin-top: 14px;
  color: #551a8b;
  font-size: 51px;
  line-height: 72px;
  text-decoration-thickness: 4px;
  text-underline-offset: 4px;
}
.entry { display: flex; align-items: flex-start; gap: 24px; margin: 49px 21px 59px 0; }
.add { display: flex; width: 674px; height: 79px; background: #fff; }
.add input { flex: 1; min-width: 0; padding: 0 12px; font-size: 36px; }
.add button { display: grid; place-items: center; width: 66px; padding-bottom: 3px; background: #f5ffff; }
.add svg { width: 42px; height: 42px; }
.filter { display: flex; width: 288px; height: 76px; margin-top: 1px; background: #fff; }
.filter select { flex: 1; appearance: none; padding: 0 24px; color: #5b34ab; font-size: 20px; }
.arrow { display: grid; place-items: center; width: 72px; padding-top: 8px; background: #673ab7; }
.arrow svg { width: 17px; height: 18px; }
.todos {
  display: grid;
  gap: 12px;
  width: 555px;
  margin: 0 0 24px;
  padding: 0 0 0 3px;
  list-style: none;
}
.todos li { display: flex; height: 76px; background: #fff; color: #000; font-size: 38px; line-height: 74px; }
.todos span { flex: 1; padding-left: 12px; }
.done, .del { display: grid; place-items: center; padding-bottom: 2px; }
.done { width: 72px; background: #0bd4a2; }
.del { width: 69px; background: #e53935; }
.todos svg { width: 24px; height: 24px; }

/* Taskbar */
.taskbar { display: flex; height: 59px; background: #1c1c1c; color: #fff; overflow: hidden; }
.search {
  display: flex;
  align-items: center;
  gap: 18px;
  width: 506px;
  padding-left: 8px;
  border: 2px solid #bfbfbf;
  border-width: 2px 2px 1px 0;
  background: #f2f2f2;
  color: #2b2b2b;
}
.search svg { width: 24px; height: 24px; }
.search input { flex: 1; min-width: 0; padding-top: 4px; font-size: 22px; }
.search input::placeholder { color: #2b2b2b; opacity: 1; }
.taskview { padding: 0 29px 0 24px; }
.taskview svg { width: 24px; height: 24px; }
.apps-row { display: flex; gap: 1px; }
.task { position: relative; display: grid; place-items: center; width: 60px; }
.task svg { width: 34px; height: 34px; overflow: visible; }
.run { background: linear-gradient(#edfcae, #edfcae) center bottom / 47px 2px no-repeat; }
.front { background: linear-gradient(#edfcae, #edfcae) center bottom / 60px 2px no-repeat #4c4c4c; }
.split { background-image: linear-gradient(to right, #edfcae 70%, #8f9672 70%, #8f9672 74%, #c1cc8e 74%); }
.badge { position: absolute; line-height: 24px; text-align: center; }
.red { left: 27px; top: 27px; width: 24px; border-radius: 8px; background: #fb3a30; font-size: 13px; }
.grey { left: 18px; top: 30px; width: 42px; border: 1px solid #888; border-radius: 12px; background: rgba(70, 70, 70, .85); font-size: 17px; font-weight: 600; line-height: 22px; }
.meter {
  position: relative;
  display: flex;
  flex-direction: column;
  align-items: center;
  justify-content: space-between;
  width: 26px;
  margin-left: 5px;
  padding: 9px 0 6px;
  background: #f0f0f0;
}
.meter svg { width: 14px; height: 8px; }
.charge {
  position: absolute;
  left: -6px;
  top: 15px;
  width: 74px;
  height: 30px;
  border: 4px solid #fff;
  background: linear-gradient(to right, #169b4b 19px, #000 19px);
  font-size: 20px;
  line-height: 24px;
  text-align: center;
}
.charge::after { content: ""; position: absolute; left: 70px; top: 4px; width: 3px; height: 14px; background: #fff; }
.tray { display: flex; align-items: center; margin-left: auto; font-size: 17px; }
.t-up { width: 18px; height: 10px; margin-right: 16px; }
.t-bat { width: 24px; height: 14px; margin-right: 15px; }
.t-wifi { width: 19px; height: 20px; margin-right: 14px; }
.t-vol { width: 23px; height: 20px; margin-right: 12px; }
.t-cloud { width: 24px; height: 18px; margin-right: 16px; }
.clock { display: grid; margin: 0 2px 0 16px; line-height: 29px; text-align: center; }
```
